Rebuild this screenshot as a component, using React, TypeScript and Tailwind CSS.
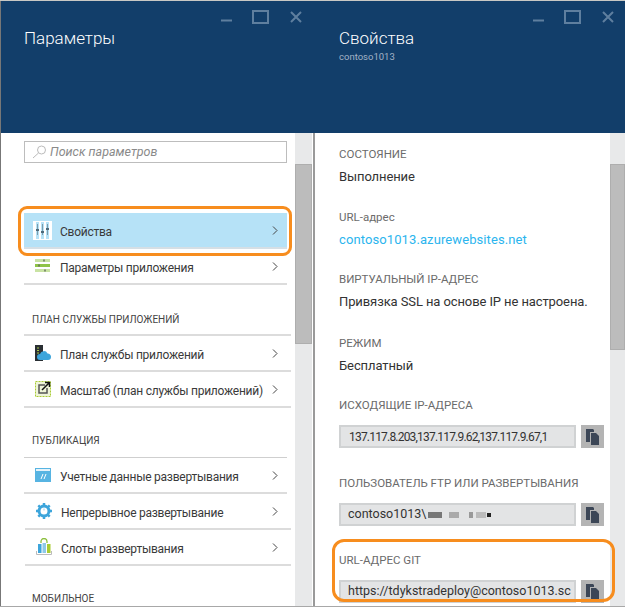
import type { ReactNode } from "react";

const font = { fontFamily: 'Roboto,"Open Sans",sans-serif' };

function WindowControls() {
  return (
    <svg width="82" height="16" viewBox="0 0 82 16" className="absolute right-[10px] top-[9px]" fill="none" stroke="#5f7f9f">
      <path d="M0 10.5h11" strokeWidth="2" />
      <rect x="32" y="1" width="15" height="12" strokeWidth="2" />
      <path d="M70 2l10 10M80 2L70 12" strokeWidth="2" />
    </svg>
  );
}

function Chevron() {
  return (
    <svg width="6" height="9" viewBox="0 0 6 9" fill="none" stroke="#444" strokeWidth="1" className="shrink-0">
      <path d="M1 .5l4 4-4 4" />
    </svg>
  );
}

function Row({ icon, label, active, className }: { icon: ReactNode; label: string; active?: boolean; className?: string }) {
  return (
    <div
      className={`flex h-[36px] items-center border-b-2 pl-[9px] pr-[9px] ${
        active ? "border-[#d5dfe5] bg-[#b6e2f7]" : "border-[#dcdcdc]"
      } ${className ?? ""}`}
    >
      <span className="flex w-[19px] shrink-0 justify-center">{icon}</span>
      <span className="ml-[8px] flex-1 whitespace-nowrap pt-[4px] text-[12px] leading-[18px] tracking-[-0.25px] text-[#3a3a3a]">{label}</span>
      <Chevron />
    </div>
  );
}

function SectionLabel({ children, className }: { children: ReactNode; className?: string }) {
  return <div className={`pl-[8px] text-[10px] leading-[14px] text-[#444] ${className ?? ""}`}>{children}</div>;
}

const SlidersIcon = (
  <svg width="19" height="19" viewBox="0 0 19 19">
    <rect width="19" height="19" fill="#fff" />
    <rect x="3" y="1" width="3" height="17" fill="#b6e2f7" />
    <rect x="8" y="1" width="3" height="17" fill="#b6e2f7" />
    <rect x="13" y="1" width="3" height="17" fill="#b6e2f7" />
    <path d="M4.500 3v11M9.500 3v11M14.500 3v11" stroke="#7c9cac" strokeWidth="1" />
    <rect x="3" y="8" width="3" height="2" fill="#4d6a7b" />
    <rect x="8" y="10" width="3" height="2" fill="#4d6a7b" />
    <rect x="13" y="7" width="3" height="2" fill="#4d6a7b" />
  </svg>
);

const ConfigIcon = (
  <svg width="16" height="14" viewBox="0 0 16 14">
    <rect y="0" width="15" height="3" fill="#c9e3a3" />
    <rect y="5" width="15" height="3" fill="#8fc447" />
    <rect y="10" width="15" height="3" fill="#c9e3a3" />
    <rect x="8" y="0.500" width="2" height="2" fill="#7f8f6f" />
    <rect x="3" y="5.500" width="2" height="2" fill="#6f7f5f" />
    <rect x="9" y="10.500" width="2" height="2" fill="#7f8f6f" />
  </svg>
);

const PlanIcon = (
  <svg width="16" height="16" viewBox="0 0 16 16">
    <rect x="0" y="0" width="8" height="16" fill="#2a2f33" />
    <path d="M2 3h2M2 5.500h2M2 8h2" stroke="#a8c94a" strokeWidth="1" />
    <path d="M5 15a3 3 0 010-6 4 4 0 017.500-.5A3.300 3.300 0 0116 12a3 3 0 01-3 3z" fill="#3da5db" />
  </svg>
);

const ScaleIcon = (
  <svg width="16" height="16" viewBox="0 0 16 16" fill="none">
    <rect x="0.500" y="0.500" width="15" height="15" fill="#eef4d8" stroke="#a9cc32" strokeWidth="1" strokeDasharray="2 1" />
    <path d="M10 4H4v8h8V7" stroke="#555" strokeWidth="1.500" />
    <path d="M7 9l7-7M10 1.500h4.500V6" stroke="#111" strokeWidth="1.500" />
  </svg>
);

const CredsIcon = (
  <svg width="16" height="14" viewBox="0 0 16 14">
    <rect width="16" height="14" fill="#57b4e2" />
    <rect x="1" y="1" width="14" height="2" fill="#e6f3fa" />
    <path d="M6 11l2-5M9 11l2-5" stroke="#fff" strokeWidth="1" />
  </svg>
);

const GearIcon = (
  <svg width="16" height="16" viewBox="0 0 16 16" fill="none">
    <circle cx="8" cy="8" r="5" stroke="#3da5db" strokeWidth="3" />
    <path d="M8 0v3M8 13v3M0 8h3M13 8h3M2.300 2.300l2 2M11.700 11.700l2 2M13.700 2.300l-2 2M4.300 11.700l-2 2" stroke="#3da5db" strokeWidth="2.500" />
    <path d="M8 5.500v2" stroke="#9ad2ee" strokeWidth="1" />
  </svg>
);

const SlotsIcon = (
  <svg width="16" height="18" viewBox="0 0 16 18" fill="none">
    <path d="M5 5V3.500a3 3 0 016 0V5" stroke="#8cbf3f" strokeWidth="1.300" />
    <rect x="2" y="6" width="3.500" height="9" fill="#3da5db" />
    <rect x="6.500" y="5" width="3.500" height="10" fill="#8fc9e8" />
    <rect x="11" y="6" width="3.500" height="9" fill="#a9cc32" />
    <path d="M.500 13v3.500h15V13" stroke="#bbb" strokeWidth="1" />
  </svg>
);

function CopyButton() {
  return (
    <div className="flex h-[23px] w-[23px] shrink-0 items-center justify-center bg-[#b4b4b4]">
      <svg width="14" height="16" viewBox="0 0 14 16">
        <path d="M0 0h7l1 1v2H4v10H0z" fill="#3c4656" />
        <path d="M5 4h5l3 3v9H5z" fill="#3c4656" />
      </svg>
    </div>
  );
}

function Field({ label, children, className }: { label: string; children: ReactNode; className?: string }) {
  return (
    <div className={className}>
      <div className="text-[11.500px] leading-[16px] text-[#6b6b6b]">{label}</div>
      <div className="mt-[12px] flex gap-[5px]">
        <div className="flex h-[23px] w-[237px] items-center overflow-hidden whitespace-nowrap border-2 border-[#d0d2d3] bg-[#e3e4e5] pl-[7px] text-[12.500px] text-[#333]">
          {children}
        </div>
        <CopyButton />
      </div>
    </div>
  );
}

function Info({ label, value, link, className }: { label: string; value: string; link?: boolean; className?: string }) {
  return (
    <div className={className}>
      <div className="text-[11.500px] leading-[16px] text-[#6b6b6b]">{label}</div>
      <div className={`mt-[6px] whitespace-nowrap text-[13px] leading-[18px] ${link ? "tracking-[0.1px] text-[#2bb5ee]" : "tracking-[-0.1px] text-[#333]"}`}>
        {value}
      </div>
    </div>
  );
}

function Scrollbar({ className, thumb }: { className?: string; thumb: string }) {
  return (
    <div className={`shrink-0 bg-[#e8e9ea] pt-[31px] ${className ?? ""}`}>
      <div className={`border border-[#aeaeae] bg-[#bcbcbc] ${thumb}`} />
    </div>
  );
}

export default function App() {
  return (
    <div className="relative flex h-[607px] w-[625px] overflow-hidden border-t border-[#c8c8c4] bg-white" style={font}>
      {/* левая панель */}
      <div className="flex w-[313px] shrink-0 flex-col border-l border-[#777]">
        <div className="relative h-[132px] bg-[#123e6a]">
          <WindowControls />
          <div className="pl-[23px] pt-[24px] text-[17px] font-light leading-[26px] text-white">Параметры</div>
        </div>
        <div className="flex min-h-0 flex-1">
          <div className="w-[294px] pl-[23px] pr-[8px] pt-[8px]">
            <div className="flex h-[22px] items-center gap-[3px] border border-[#bdbdbd] pl-[7px]">
              <svg width="15" height="14" viewBox="0 0 15 14" fill="none" stroke="#bbb" strokeWidth="1">
                <circle cx="9.500" cy="5" r="4" />
                <path d="M6.500 8L1 13" />
              </svg>
              <span className="pt-[1px] text-[12.500px] italic text-[#8a8a8a]">Поиск параметров</span>
            </div>
            <div className="mt-[50px]">
              <Row icon={SlidersIcon} label="Свойства" active />
              <Row icon={ConfigIcon} label="Параметры приложения" />
            </div>
            <SectionLabel className="mt-[28px]">ПЛАН СЛУЖБЫ ПРИЛОЖЕНИЙ</SectionLabel>
            <div className="-mr-[4px] mt-[7px] border-t-2 border-[#dcdcdc]">
              <Row icon={PlanIcon} label="План службы приложений" className="pr-[13px]" />
              <Row icon={ScaleIcon} label="Масштаб (план службы приложений)" className="pr-[13px]" />
            </div>
            <SectionLabel className="mt-[26px]">ПУБЛИКАЦИЯ</SectionLabel>
            <div className="mt-[9px] border-t border-[#cfcfcf]">
              <Row icon={CredsIcon} label="Учетные данные развертывания" />
              <Row icon={GearIcon} label="Непрерывное развертывание" className="-mr-[4px] ml-[1px] pl-[8px] pr-[13px]" />
              <Row icon={SlotsIcon} label="Слоты развертывания" className="-mr-[4px] ml-[1px] pl-[8px] pr-[13px]" />
            </div>
            <SectionLabel className="mt-[26px]">МОБИЛЬНОЕ</SectionLabel>
          </div>
          <Scrollbar className="w-[17px]" thumb="h-[180px]" />
        </div>
      </div>

      {/* правая панель */}
      <div className="flex flex-1 flex-col">
        <div className="relative h-[132px] bg-[#123e6a]">
          <WindowControls />
          <div className="pl-[26px] pt-[24px] text-[17px] font-light leading-[26px] text-white">Свойства</div>
          <div className="pl-[26px] text-[9.500px] leading-[12px] text-[#a3b3c6]">contoso1013</div>
        </div>
        <div className="flex min-h-0 flex-1">
          <div className="flex-1 border-l-2 border-[#9a9a9a] pl-[24px] pt-[13px]">
            <Info label="СОСТОЯНИЕ" value="Выполнение" />
            <Info label="URL-адрес" value="contoso1013.azurewebsites.net" link className="mt-[23px]" />
            <Info label="ВИРТУАЛЬНЫЙ IP-АДРЕС" value="Привязка SSL на основе IP не настроена." className="mt-[22px]" />
            <Info label="РЕЖИМ" value="Бесплатный" className="mt-[24px]" />
            <Field label="ИСХОДЯЩИЕ IP-АДРЕСА" className="mt-[22px]">
              <span className="pl-[1px] text-[12px] tracking-[-0.8px]">137.117.8.203,137.117.9.62,137.117.9.67,1</span>
            </Field>
            <Field label="ПОЛЬЗОВАТЕЛЬ FTP ИЛИ РАЗВЕРТЫВАНИЯ" className="mt-[27px]">
              contoso1013\
              <span className="ml-[1px] inline-block h-[6px] w-[14px] bg-[#777]" />
              <span className="ml-[7px] inline-block h-[6px] w-[10px] bg-[#aaa]" />
              <span className="ml-[10px] inline-block h-[6px] w-[4px] bg-[#999]" />
              <span className="ml-[3px] inline-block h-[6px] w-[10px] bg-[#bbb]" />
              <span className="ml-[1px] inline-block h-[4px] w-[4px] bg-[#222]" />
            </Field>
            <Field label="URL-АДРЕС GIT" className="mt-[26px]">
              https://tdykstradeploy@contoso1013.sc
            </Field>
          </div>
          <Scrollbar className="w-[15px]" thumb="h-[186px]" />
        </div>
      </div>

      {/* оранжевые рамки */}
      <div className="absolute left-[18px] top-[205px] h-[50px] w-[274px] rounded-[9px] border-[3px] border-[#f78d1e]" />
      <div className="absolute left-[332px] top-[538px] h-[63px] w-[283px] rounded-[12px] border-[3px] border-[#f78d1e]" />
      <div className="absolute bottom-0 left-0 h-[1px] w-full bg-[#a8a8a8]" />
    </div>
  );
}
